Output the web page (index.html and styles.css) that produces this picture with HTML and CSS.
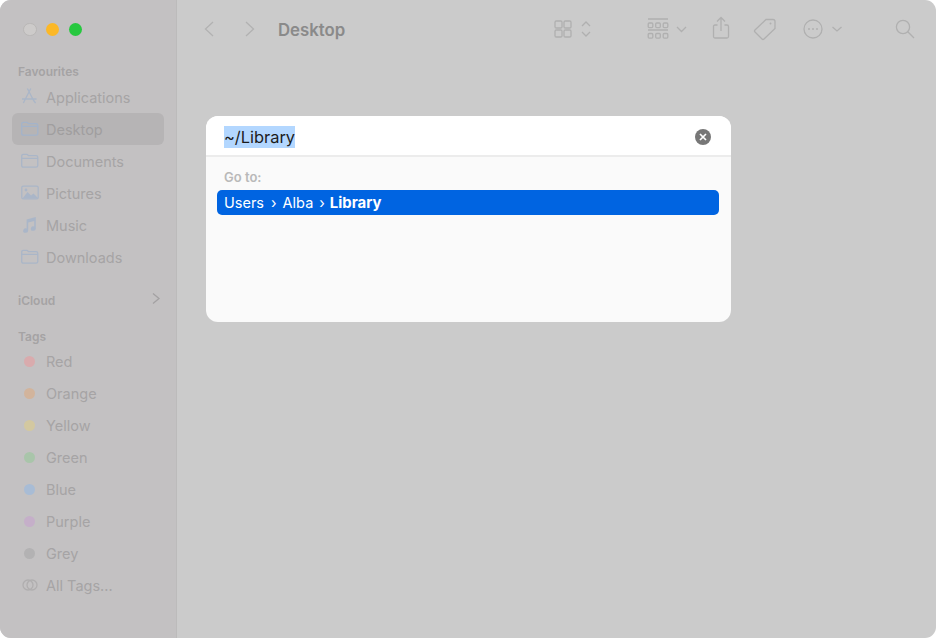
FILE: index.html
```html
<!DOCTYPE html>
<html lang="en">
<head>
<meta charset="utf-8">
<title>Desktop</title>
<link rel="stylesheet" href="styles.css">
</head>
<body>
<div class="window">
  <aside class="sidebar">
    <div class="traffic">
      <span class="light close"></span>
      <span class="light min"></span>
      <span class="light max"></span>
    </div>
    <div class="section-title first">Favourites</div>
    <div class="row">
      <svg class="ico" viewBox="0 0 18 18"><path d="M9.8 0.5 L3.6 12.5 M6.4 0.5 L12.6 12.5 M1 11 H15.5 M3.6 12.5 L2.4 15 M12.6 12.5 L14.6 15"/></svg>
      <span>Applications</span>
    </div>
    <div class="row active">
      <svg class="ico" viewBox="0 0 18 18"><path d="M0.7 4.5 V4 Q0.7 2.3 2.4 2.3 H6 L7.5 3.6 H15 Q16.8 3.6 16.8 5.4 V13.4 Q16.8 15.2 15 15.2 H2.4 Q0.7 15.2 0.7 13.4 Z M0.7 6.4 H16.8"/></svg>
      <span>Desktop</span>
    </div>
    <div class="row">
      <svg class="ico" viewBox="0 0 18 18"><path d="M0.7 4.5 V4 Q0.7 2.3 2.4 2.3 H6 L7.5 3.6 H15 Q16.8 3.6 16.8 5.4 V13.4 Q16.8 15.2 15 15.2 H2.4 Q0.7 15.2 0.7 13.4 Z M0.7 6.4 H16.8"/></svg>
      <span>Documents</span>
    </div>
    <div class="row">
      <svg class="ico" viewBox="0 0 18 18"><rect x="0.8" y="2.2" width="16.4" height="12.6" rx="1.4"/><path class="solid" d="M1.5 14.5 L6.5 8 L10 11.5 L12.5 9.5 L16.5 13.5 V14.5 Z"/><circle class="solid" cx="5" cy="6" r="1.4"/></svg>
      <span>Pictures</span>
    </div>
    <div class="row">
      <svg class="ico" viewBox="0 0 18 18"><path class="solid" d="M5.6 3.6 L14.8 1 V12.6 A2.5 2.2 0 1 1 13.2 10.6 V5 L7.2 6.6 V14.6 A2.5 2.2 0 1 1 5.6 12.6 Z"/></svg>
      <span>Music</span>
    </div>
    <div class="row">
      <svg class="ico" viewBox="0 0 18 18"><path d="M0.7 4.5 V4 Q0.7 2.3 2.4 2.3 H6 L7.5 3.6 H15 Q16.8 3.6 16.8 5.4 V13.4 Q16.8 15.2 15 15.2 H2.4 Q0.7 15.2 0.7 13.4 Z M0.7 6.4 H16.8"/></svg>
      <span>Downloads</span>
    </div>
    <div class="section-title icloud">
      <span>iCloud</span>
      <svg class="disclosure" viewBox="0 0 10 12"><path d="M2 1 L8 6 L2 11"/></svg>
    </div>
    <div class="section-title tags">Tags</div>
    <div class="row"><span class="dot red"></span><span>Red</span></div>
    <div class="row"><span class="dot orange"></span><span>Orange</span></div>
    <div class="row"><span class="dot yellow"></span><span>Yellow</span></div>
    <div class="row"><span class="dot green"></span><span>Green</span></div>
    <div class="row"><span class="dot blue"></span><span>Blue</span></div>
    <div class="row"><span class="dot purple"></span><span>Purple</span></div>
    <div class="row"><span class="dot grey"></span><span>Grey</span></div>
    <div class="row">
      <svg class="ico alltags" viewBox="0 0 18 12"><circle cx="7" cy="6" r="5"/><circle cx="11" cy="6" r="5"/></svg>
      <span>All Tags...</span>
    </div>
  </aside>
  <main class="main">
    <header class="toolbar">
      <svg class="tool nav" viewBox="0 0 12 18"><path d="M10 2 L2.5 9 L10 16"/></svg>
      <svg class="tool nav next" viewBox="0 0 12 18"><path d="M2 2 L9.5 9 L2 16"/></svg>
      <h1 class="title">Desktop</h1>
      <div class="spacer"></div>
      <svg class="tool view" viewBox="0 0 38 18"><rect x="1" y="1" width="7" height="7" rx="1.2"/><rect x="10" y="1" width="7" height="7" rx="1.2"/><rect x="1" y="10" width="7" height="7" rx="1.2"/><rect x="10" y="10" width="7" height="7" rx="1.2"/><path d="M28 6 L32 2 L36 6 M28 12 L32 16 L36 12"/></svg>
      <svg class="tool group" viewBox="0 0 41 22"><path d="M1 1 H21 M1 12 H21"/><rect x="1.2" y="5" width="4.6" height="4.6" rx="1"/><rect x="8.7" y="5" width="4.6" height="4.6" rx="1"/><rect x="16.2" y="5" width="4.6" height="4.6" rx="1"/><rect x="1.2" y="15.5" width="4.6" height="4.6" rx="1"/><rect x="8.7" y="15.5" width="4.6" height="4.6" rx="1"/><rect x="16.2" y="15.5" width="4.6" height="4.6" rx="1"/><path d="M30 9 L34.5 13.5 L39 9"/></svg>
      <svg class="tool share" viewBox="0 0 18 24"><path d="M9 15 V2 M5 5.5 L9 1.5 L13 5.5 M5.5 9 H3 Q1.5 9 1.5 10.5 V20.5 Q1.5 22 3 22 H15 Q16.5 22 16.5 20.5 V10.5 Q16.5 9 15 9 H12.5"/></svg>
      <svg class="tool tag" viewBox="0 0 24 24"><path d="M13 2.5 H20 Q22 2.5 22 4.5 V11.5 L11 22 Q10 23 9 22 L2 15 Q1 14 2 13 Z"/><circle class="solid" cx="17.5" cy="6.5" r="1"/></svg>
      <svg class="tool more" viewBox="0 0 39 20"><circle cx="10" cy="10" r="9"/><circle class="solid" cx="6" cy="10" r="1"/><circle class="solid" cx="10" cy="10" r="1"/><circle class="solid" cx="14" cy="10" r="1"/><path d="M29.5 8 L34 12 L38.5 8"/></svg>
      <svg class="tool search" viewBox="0 0 20 20"><circle cx="8" cy="8" r="6.6"/><path d="M12.8 12.8 L19 19"/></svg>
    </header>
  </main>
  <section class="dialog">
    <div class="field">
      <span class="input-text">~/Library</span>
      <span class="clear">
        <svg viewBox="0 0 16 16"><path d="M5 5 L11 11 M11 5 L5 11"/></svg>
      </span>
    </div>
    <div class="results">
      <div class="goto">Go to:</div>
      <div class="path">
        <span>Users</span><span class="sep">›</span><span>Alba</span><span class="sep">›</span><strong>Library</strong>
      </div>
    </div>
  </section>
</div>
</body>
</html>
```
FILE: styles.css
```css
* { box-sizing: border-box; }
html, body { margin: 0; padding: 0; height: 100%; background: #fff; }
body { font-family: Inter, "Liberation Sans", sans-serif; }

.window {
  position: relative;
  width: 936px;
  height: 638px;
  display: flex;
  border-radius: 11px;
  overflow: hidden;
  background: #cbcbcb;
}

.sidebar {
  width: 177px;
  flex: none;
  background: #c3c1c2;
  border-right: 1px solid #bcbbbb;
  padding-left: 12px;
  padding-right: 12px;
}

.traffic { display: flex; gap: 9.4px; padding: 23px 0 0 11.4px; height: 65px; }
.light { width: 13.3px; height: 13.3px; border-radius: 50%; }
.close { background: #cdcbca; border: 1px solid #b9b7b6; }
.min { background: #fcb827; }
.max { background: #27c83f; }

.section-title {
  font-size: 12px;
  line-height: 14px;
  font-weight: 600;
  color: #a5a3a4;
  padding-left: 6px;
}
.section-title.first { margin-bottom: 2px; }
.icloud {
  display: flex;
  justify-content: space-between;
  align-items: center;
  margin-top: 21px;
  padding-right: 3px;
}
.disclosure { width: 10px; height: 13px; fill: none; stroke: #a3a1a2; stroke-width: 1.3; margin-top: -5px; }
.tags { margin-top: 22px; margin-bottom: 1px; }

.row {
  height: 32px;
  display: flex;
  align-items: center;
  font-size: 14.5px;
  color: #a6a4a5;
  border-radius: 6px;
  padding-left: 34px;
  position: relative;
}
.row.active { background: #b6b4b5; color: #a09e9f; }
.row.active .ico { stroke: #a3b3ca; }

.ico {
  position: absolute;
  left: 9px;
  top: 7px;
  width: 18px;
  height: 18px;
  fill: none;
  stroke: #aab6c8;
  stroke-width: 1.3;
}
.ico .solid { fill: #aab6c8; stroke: none; }
.ico.alltags { height: 12px; top: 10px; stroke: #b0aeaf; }

.dot { position: absolute; left: 12px; top: 10.5px; width: 11px; height: 11px; border-radius: 50%; }
.red { background: #d9abad; }
.orange { background: #d2b49c; }
.yellow { background: #d3c8a0; }
.green { background: #a9c5aa; }
.blue { background: #a8bcd5; }
.purple { background: #c5afc9; }
.grey { background: #b3b2b3; }

.main { flex: 1; min-width: 0; }
.toolbar { height: 58px; display: flex; align-items: center; padding-left: 26px; padding-right: 21px; }
.tool { fill: none; stroke: #b0b0b0; stroke-width: 1.3; flex: none; }
.tool .solid { fill: #b0b0b0; stroke: none; }
.nav { width: 12px; height: 18px; stroke: #b2b2b2; }
.next { margin-left: 29px; }
.title { font-size: 16.8px; font-weight: 600; color: #8a8a8a; margin: 2px 0 0 22px; line-height: 22px; }
.spacer { flex: 1; }
.view { width: 38px; height: 18px; }
.group { width: 41px; height: 22px; margin-left: 55px; }
.share { width: 18px; height: 24px; margin-left: 24px; margin-top: -3px; }
.tag { width: 24px; height: 24px; margin-left: 23px; }
.more { width: 39px; height: 20px; margin-left: 26px; }
.search { width: 20px; height: 20px; margin-left: 53px; }

.dialog {
  position: absolute;
  left: 205.5px;
  top: 116px;
  width: 525px;
  height: 206px;
  border-radius: 12px;
  overflow: hidden;
  background: #fafafa;
  display: flex;
  flex-direction: column;
}
.field {
  height: 41px;
  flex: none;
  background: #fff;
  border-bottom: 2px solid #ececec;
  display: flex;
  align-items: center;
  justify-content: space-between;
  padding: 2px 19.5px 0 18.5px;
}
.input-text {
  font-size: 16.4px;
  line-height: 22px;
  color: #1c1c1c;
  background: #b3d7ff;
}
.clear { width: 16px; height: 16px; border-radius: 50%; background: #777; display: flex; }
.clear svg { width: 16px; height: 16px; fill: none; stroke: #fff; stroke-width: 1.7; }
.results { padding: 12px 11.5px 0; }
.goto { font-size: 13px; font-weight: 600; line-height: 16px; color: #b9b9b9; padding-left: 7px; margin-bottom: 5px; }
.path {
  height: 25px;
  background: #0064e1;
  border-radius: 5px;
  color: #fff;
  font-size: 14.5px;
  display: flex;
  align-items: center;
  padding-left: 7px;
}
.sep { margin: 0 6px 0 7px; }
.sep + span { margin-right: -1px; }
.path strong { font-weight: 700; font-size: 14.9px; margin-left: -1px; }
```
